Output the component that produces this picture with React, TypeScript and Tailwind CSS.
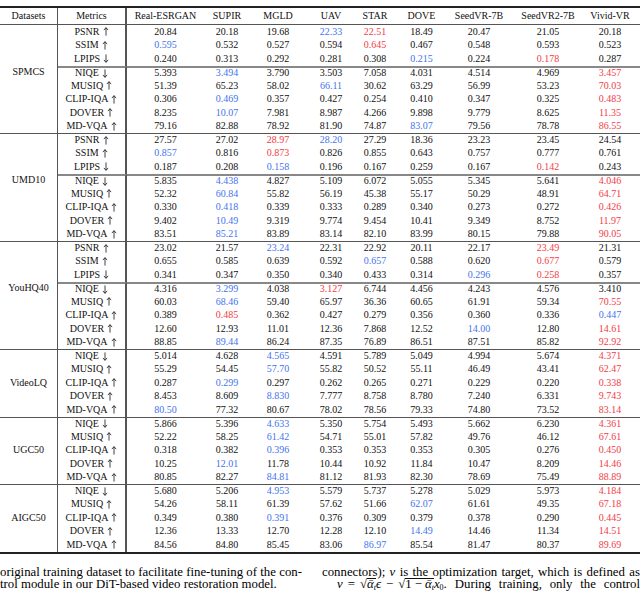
import React from 'react'

type Block = {
  name: string
  labelAt: number
  ruleAt: number | null
  rows: [string, string][]
}

const methods = ['Real-ESRGAN', 'SUPIR', 'MGLD', 'UAV', 'STAR', 'DOVE', 'SeedVR-7B', 'SeedVR2-7B', 'Vivid-VR']

// metric names end with ^ (higher is better) or v (lower is better)
// values: trailing "b" = blue (second best), trailing "r" = red (best)
const blocks: Block[] = [
  {
    name: 'SPMCS',
    labelAt: 3,
    ruleAt: 3,
    rows: [
      ['PSNR ^', '20.84 20.18 19.68 22.33b 22.51r 18.49 20.47 21.05 20.18'],
      ['SSIM ^', '0.595b 0.532 0.527 0.594 0.645r 0.467 0.548 0.593 0.523'],
      ['LPIPS v', '0.240 0.313 0.292 0.281 0.308 0.215b 0.224 0.178r 0.287'],
      ['NIQE v', '5.393 3.494b 3.790 3.503 7.058 4.031 4.514 4.969 3.457r'],
      ['MUSIQ ^', '51.39 65.23 58.02 66.11b 30.62 63.29 56.99 53.23 70.03r'],
      ['CLIP-IQA ^', '0.306 0.469b 0.357 0.427 0.254 0.410 0.347 0.325 0.483r'],
      ['DOVER ^', '8.235 10.07b 7.981 8.987 4.266 9.898 9.779 8.625 11.35r'],
      ['MD-VQA ^', '79.16 82.88 78.92 81.90 74.87 83.07b 79.56 78.78 86.55r'],
    ],
  },
  {
    name: 'UMD10',
    labelAt: 3,
    ruleAt: 3,
    rows: [
      ['PSNR ^', '27.57 27.02 28.97r 28.20b 27.29 18.36 23.23 23.45 24.54'],
      ['SSIM ^', '0.857b 0.816 0.873r 0.826 0.855 0.643 0.757 0.777 0.761'],
      ['LPIPS v', '0.187 0.208 0.158b 0.196 0.167 0.259 0.167 0.142r 0.243'],
      ['NIQE v', '5.835 4.438b 4.827 5.109 6.072 5.055 5.345 5.641 4.046r'],
      ['MUSIQ ^', '52.32 60.84b 55.82 56.19 45.38 55.17 50.29 48.91 64.71r'],
      ['CLIP-IQA ^', '0.330 0.418b 0.339 0.333 0.289 0.340 0.273 0.272 0.426r'],
      ['DOVER ^', '9.402 10.49b 9.319 9.774 9.454 10.41 9.349 8.752 11.97r'],
      ['MD-VQA ^', '83.51 85.21b 83.89 83.14 82.10 83.99 80.15 79.88 90.05r'],
    ],
  },
  {
    name: 'YouHQ40',
    labelAt: 3,
    ruleAt: 3,
    rows: [
      ['PSNR ^', '23.02 21.57 23.24b 22.31 22.92 20.11 22.17 23.49r 21.31'],
      ['SSIM ^', '0.655 0.585 0.639 0.592 0.657b 0.588 0.620 0.677r 0.579'],
      ['LPIPS v', '0.341 0.347 0.350 0.340 0.433 0.314 0.296b 0.258r 0.357'],
      ['NIQE v', '4.316 3.299b 4.038 3.127r 6.744 4.456 4.243 4.576 3.410'],
      ['MUSIQ ^', '60.03 68.46b 59.40 65.97 36.36 60.65 61.91 59.34 70.55r'],
      ['CLIP-IQA ^', '0.389 0.485r 0.362 0.427 0.279 0.356 0.360 0.336 0.447b'],
      ['DOVER ^', '12.60 12.93 11.01 12.36 7.868 12.52 14.00b 12.80 14.61r'],
      ['MD-VQA ^', '88.85 89.44b 86.24 87.35 76.89 86.51 87.51 85.82 92.92r'],
    ],
  },
  {
    name: 'VideoLQ',
    labelAt: 2,
    ruleAt: null,
    rows: [
      ['NIQE v', '5.014 4.628 4.565b 4.591 5.789 5.049 4.994 5.674 4.371r'],
      ['MUSIQ ^', '55.29 54.45 57.70b 55.82 50.52 55.11 46.49 43.41 62.47r'],
      ['CLIP-IQA ^', '0.287 0.299b 0.297 0.262 0.265 0.271 0.229 0.220 0.338r'],
      ['DOVER ^', '8.453 8.609 8.830b 7.777 8.758 8.780 7.240 6.331 9.743r'],
      ['MD-VQA ^', '80.50b 77.32 80.67 78.02 78.56 79.33 74.80 73.52 83.14r'],
    ],
  },
  {
    name: 'UGC50',
    labelAt: 2,
    ruleAt: null,
    rows: [
      ['NIQE v', '5.866 5.396 4.633b 5.350 5.754 5.493 5.662 6.230 4.361r'],
      ['MUSIQ ^', '52.22 58.25 61.42b 54.71 55.01 57.82 49.76 46.12 67.61r'],
      ['CLIP-IQA ^', '0.318 0.382 0.396b 0.353 0.353 0.353 0.305 0.276 0.450r'],
      ['DOVER ^', '10.25 12.01b 11.78 10.44 10.92 11.84 10.47 8.209 14.46r'],
      ['MD-VQA ^', '80.85 82.27 84.81b 81.12 81.93 82.30 78.69 75.49 88.89r'],
    ],
  },
  {
    name: 'AIGC50',
    labelAt: 2,
    ruleAt: null,
    rows: [
      ['NIQE v', '5.680 5.206 4.953b 5.579 5.737 5.278 5.029 5.973 4.184r'],
      ['MUSIQ ^', '54.26 58.11 61.39 57.62 51.66 62.07b 61.61 49.35 67.18r'],
      ['CLIP-IQA ^', '0.349 0.380 0.391b 0.376 0.309 0.379 0.378 0.290 0.445r'],
      ['DOVER ^', '12.36 13.33 12.70 12.28 12.10 14.49b 14.46 11.34 14.51r'],
      ['MD-VQA ^', '84.56 84.80 85.45 83.06 86.97b 85.54 81.47 80.37 89.69r'],
    ],
  },
]

const grid =
  'grid grid-cols-[58px_69px_77px_46px_56px_50px_38px_55px_60px_78px_46px_7px]'

function Arrow({ up }: { up: boolean }) {
  return (
    <svg width="6" height="9" viewBox="0 0 6 9" className={`ml-[3px] ${up ? '' : 'rotate-180'}`}>
      <path d="M3 8.6V0.8M0.9 3.1L3 0.6L5.1 3.1" fill="none" stroke="#111" strokeWidth="0.8" />
    </svg>
  )
}

function Metric({ m }: { m: string }) {
  const up = m.endsWith('^')
  return (
    <span className="flex items-center">
      {m.slice(0, -2)}
      <Arrow up={up} />
    </span>
  )
}

function Value({ v }: { v: string }) {
  const last = v[v.length - 1]
  if (last === 'b') return <span className="text-[#3f74ee]">{v.slice(0, -1)}</span>
  if (last === 'r') return <span className="text-[#f23c46]">{v.slice(0, -1)}</span>
  return <span>{v}</span>
}

function Bar({ children }: { children: React.ReactNode }) {
  return <span className="inline-block border-t-[0.8px] border-[#111] leading-[11px]">{children}</span>
}

// a justified line: words spread from edge to edge
function Line({ words }: { words: React.ReactNode[] }) {
  return (
    <div className="flex justify-between whitespace-nowrap">
      {words.map((w, i) => (
        <span key={i}>{w}</span>
      ))}
    </div>
  )
}

export default function App() {
  return (
    <div className="w-[640px] h-[595px] overflow-hidden bg-white text-[#111] font-['Liberation_Serif','DejaVu_Serif',serif]">
      <div className="pt-[6px]">
        <div className="border-t-2 border-b-2 border-[#222] text-[10px] leading-none">
          {/* header */}
          <div className={`${grid} h-[17px] border-b border-[#555]`}>
            <div className="flex items-center justify-center border-r border-[#555]">Datasets</div>
            <div className="flex items-center justify-center border-r-2 border-[#555]">Metrics</div>
            {methods.map((m) => (
              <div key={m} className="flex items-center justify-center">
                {m}
              </div>
            ))}
            <div />
          </div>

          {blocks.map((b, bi) =>
            b.rows.map(([metric, vals], ri) => {
              const top = ri === 0 && bi > 0
              const rule = b.ruleAt === ri
              const rc = top ? 'border-t border-t-[#555]' : rule ? 'border-t-2 border-t-[#888]' : ''
              return (
                <div key={b.name + metric} className={`${grid} h-[13.5px]`}>
                  <div
                    className={`flex items-center justify-center border-r border-r-[#555] ${top ? 'border-t border-t-[#555]' : ''}`}
                  >
                    {ri === b.labelAt ? b.name : ''}
                  </div>
                  <div className={`flex items-center justify-center border-r-2 border-r-[#555] ${rc}`}>
                    <Metric m={metric} />
                  </div>
                  {vals.split(' ').map((v, i) => (
                    <div key={i} className={`flex items-center justify-center ${rc}`}>
                      <Value v={v} />
                    </div>
                  ))}
                  <div className={rc} />
                </div>
              )
            }),
          )}
        </div>
      </div>

      <div className="mt-[12px] flex text-[12.8px] leading-[12.5px] text-black">
        <div className="w-[302px] shrink-0">
          <Line words={'original training dataset to facilitate fine-tuning of the con-'.split(' ')} />
          <p className="whitespace-nowrap">trol module in our DiT-based video restoration model.</p>
        </div>
        <div className="ml-[20px] w-[318px] shrink-0">
          <Line
            words={[
              'connectors);',
              <i>v</i>,
              ...'is the optimization target, which is defined as'.split(' '),
            ]}
          />
          <div className="flex items-baseline whitespace-nowrap pl-[15px]">
            <span>
              <i>v</i>
              <span className="mx-[5px]">=</span>√
              <Bar>
                <i>ᾱ</i>
                <sub className="text-[8px]">
                  <i>t</i>
                </sub>
              </Bar>
              <i>ϵ</i>
              <span className="mx-[5px]">−</span>√
              <Bar>
                1<span className="mx-[3px]">−</span>
                <i>ᾱ</i>
                <sub className="text-[8px]">
                  <i>t</i>
                </sub>
              </Bar>
              <i>x</i>
              <sub className="text-[8px]">0</sub>.
            </span>
            <span className="ml-[8px] flex-1">
              <Line words={['During', 'training,', 'only', 'the', 'control']} />
            </span>
          </div>
        </div>
      </div>
    </div>
  )
}
